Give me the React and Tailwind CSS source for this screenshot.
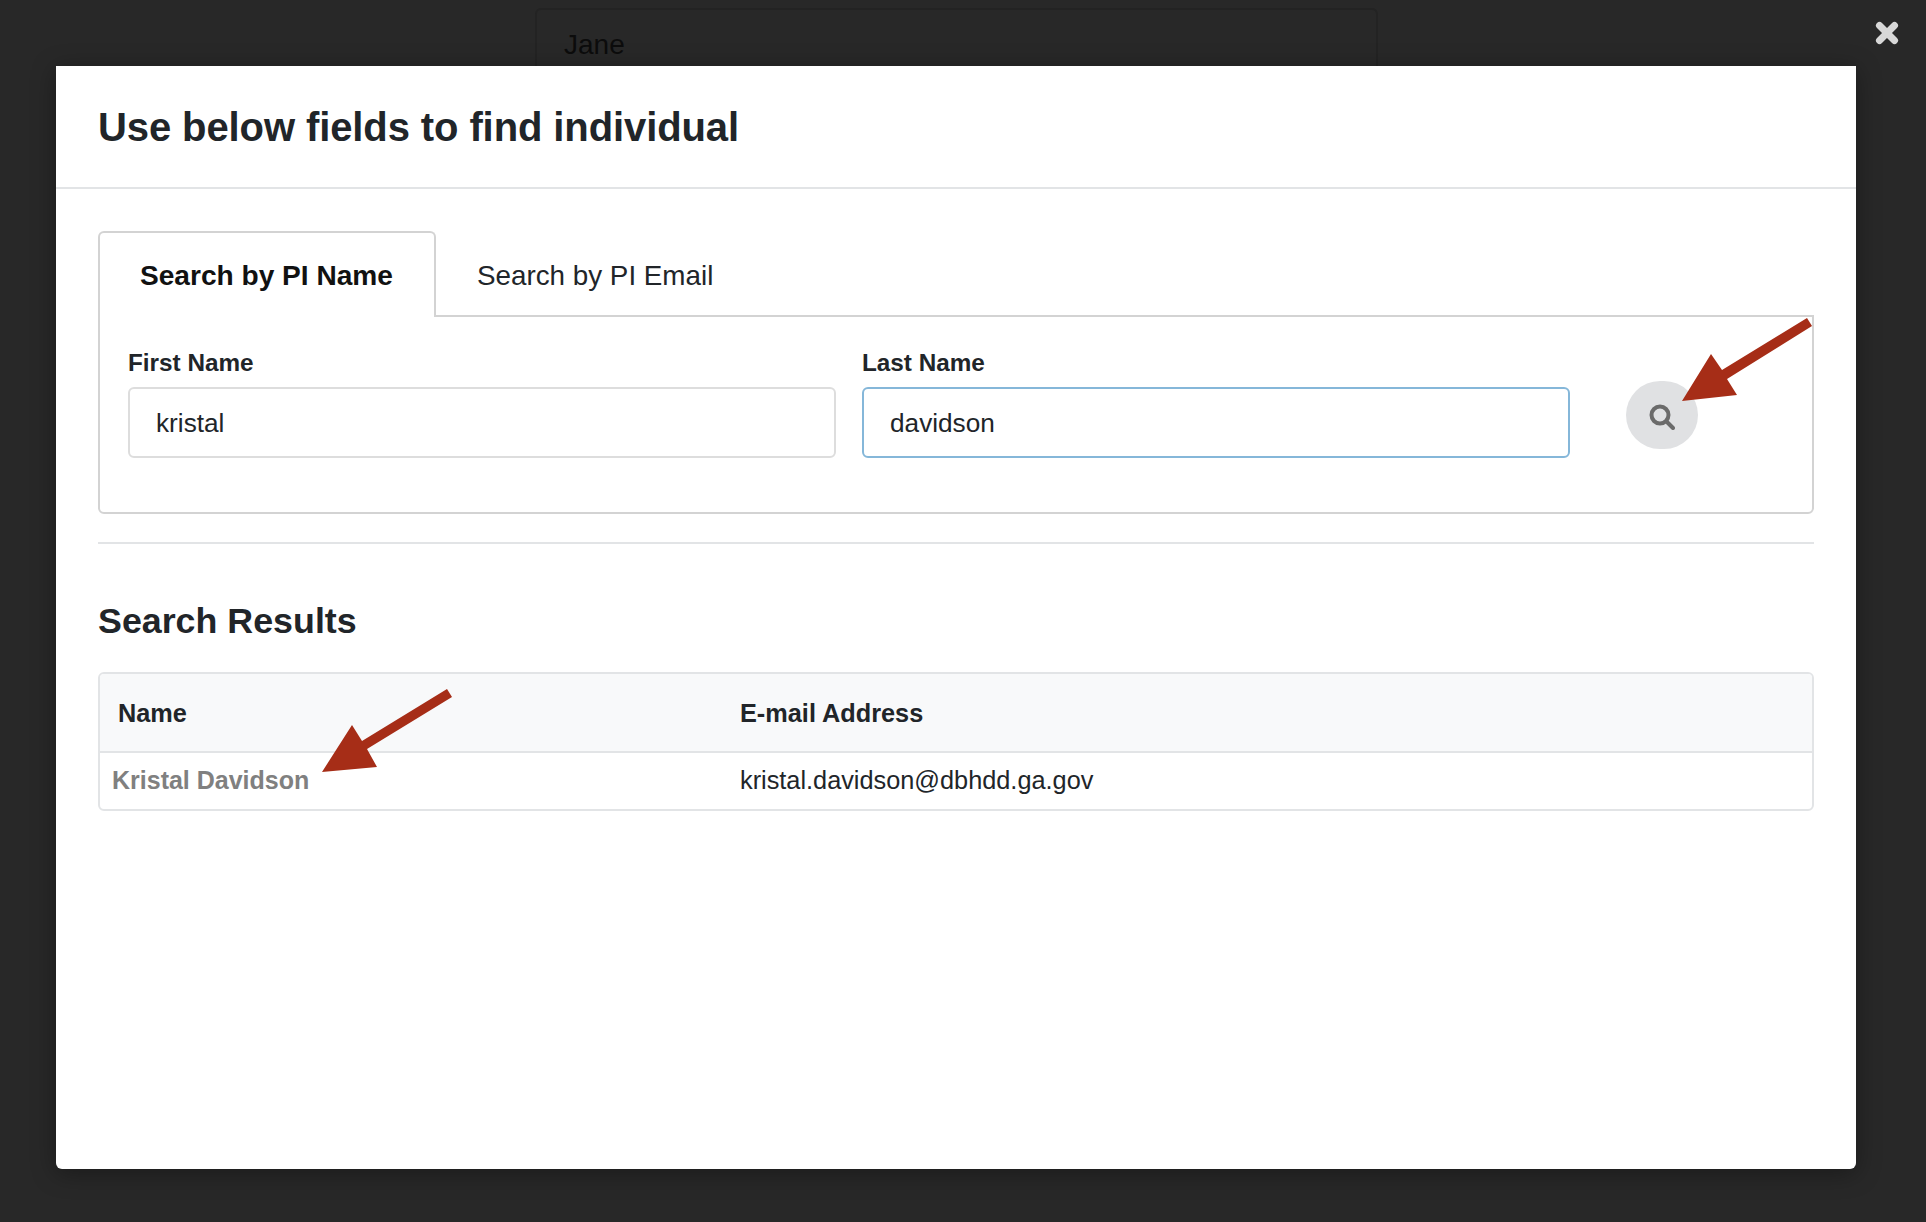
import { useState } from 'react';

function RedArrow({ className, box, points }) {
  return (
    <svg className={className} viewBox={box}>
      <polygon points={points} fill="#a62d17" />
    </svg>
  );
}

function SearchIcon() {
  return (
    <svg className="w-[26px] h-[26px] mt-[4px]" viewBox="0 0 26 26" fill="none" stroke="#6b6b6b">
      <circle cx="11" cy="11" r="8.5" strokeWidth="4" />
      <line x1="17.5" y1="17.5" x2="24" y2="24" strokeWidth="4" strokeLinecap="round" />
    </svg>
  );
}

function Field({ label, value, focused }) {
  const border = focused ? 'border-[#85b7d9]' : 'border-[#dddddd]';
  return (
    <div className="w-[708px] flex flex-col">
      <label className="mt-[1px] text-[24.3px] leading-[28px] font-bold text-[#212529] mb-[10px]">{label}</label>
      <input
        readOnly
        value={value}
        className={`h-[71px] px-[26px] pt-[2px] border-2 rounded-[6px] bg-white text-[26.2px] text-[#212529] outline-none ${border}`}
      />
    </div>
  );
}

export default function App() {
  const [tab] = useState('name');

  return (
    <div className="relative h-[1222px] overflow-hidden bg-[#282828] font-['Liberation_Sans',Arial,sans-serif]">
      {/* page behind the overlay */}
      <div className="ml-[535px] mt-2 w-[843px] h-[70px] border-2 border-[#232323] rounded-[6px] pl-[27px] pt-[17px] text-[28px] leading-[36px] text-[#0c0c0c]">
        Jane
      </div>

      <button className="absolute left-[1875px] top-[21px] w-6 h-6">
        <svg viewBox="0 0 24 24" className="w-6 h-6" stroke="#d8d8d8" strokeWidth="7" strokeLinecap="round">
          <line x1="4.5" y1="4.5" x2="19.5" y2="19.5" />
          <line x1="19.5" y1="4.5" x2="4.5" y2="19.5" />
        </svg>
      </button>

      <div className="absolute left-[56px] top-[66px] w-[1800px] h-[1103px] bg-white rounded-b-[6px] shadow-[0_4px_24px_rgba(0,0,0,0.35)] flex flex-col">
        <div className="h-[123px] shrink-0 border-b-2 border-[#e2e4e6] pl-[42px] pt-[37px]">
          <h1 className="text-[40px] leading-[48px] font-bold tracking-[-0.1px] text-[#212529]">Use below fields to find individual</h1>
        </div>

        <div className="flex-1 px-[42px] pt-[42px]">
          <div className="flex items-end h-[84px]">
            <div className="relative z-10 h-[86px] -mb-[2px] pl-[40px] pr-[41px] pt-[25px] border-2 border-b-0 border-[#d3d3d3] rounded-t-[6px] bg-white text-[28.1px] leading-[36px] font-bold text-[#111111]">
              {tab === 'name' && 'Search by PI Name'}
            </div>
            <div className="h-[84px] pl-[41px] pr-[42px] pt-[27px] text-[27.8px] leading-[36px] text-[#212529]">
              Search by PI Email
            </div>
          </div>

          <div className="relative h-[199px] border-2 border-[#d3d3d3] rounded-b-[6px] pl-[28px] pt-[31px] flex">
            <Field label="First Name" value="kristal" />
            <div className="w-[26px]" />
            <Field label="Last Name" value="davidson" focused />
            <button className="ml-[56px] mt-[33px] w-[72px] h-[68px] rounded-full bg-[#e0e1e3] flex items-center justify-center">
              <SearchIcon />
            </button>
          </div>

          <div className="mt-[28px] border-t-2 border-[#e2e4e6]" />

          <h2 className="mt-[55px] text-[35.8px] leading-[44px] font-bold text-[#212529]">Search Results</h2>

          <div className="mt-[29px] h-[139px] border-2 border-[#e2e4e6] rounded-[6px] overflow-hidden">
            <div className="h-[79px] bg-[#f8f9fa] border-b-2 border-[#e2e4e6] flex items-center pt-[2px] text-[25.3px] font-bold text-[#212529]">
              <div className="w-[640px] pl-[18px]">Name</div>
              <div>E-mail Address</div>
            </div>
            <div className="h-[56px] flex items-center">
              <div className="w-[640px] pl-[12px] text-[25px] font-bold text-[#808080]">Kristal Davidson</div>
              <div className="text-[25.3px] text-[#212529]">kristal.davidson@dbhdd.ga.gov</div>
            </div>
          </div>
        </div>
      </div>

      <RedArrow
        className="absolute left-[1680px] top-[316px] w-[134px] h-[86px]"
        box="1680 316 134 86"
        points="1807,318 1812,326 1727,379 1737,395 1682,401 1711,354 1722,370"
      />
      <RedArrow
        className="absolute left-[320px] top-[688px] w-[134px] h-[86px]"
        box="320 688 134 86"
        points="447,689 452,697 367,749 377,767 322,772 352,725 362,741"
      />
    </div>
  );
}
